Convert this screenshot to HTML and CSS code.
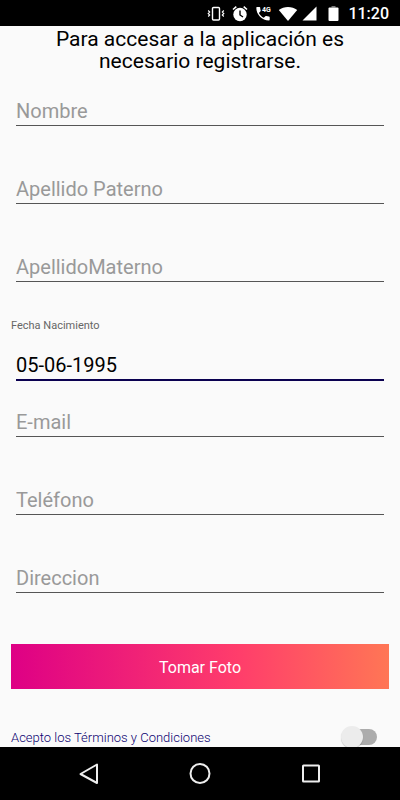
FILE: index.html
```html
<!DOCTYPE html>
<html lang="es">
<head>
    <meta charset="UTF-8">
    <meta name="viewport" content="width=device-width, initial-scale=1.0">
    <title>Registro</title>

    <link rel="stylesheet" href="styles.css">
</head>
<body>

    <!--  Barra de estado  -->

    <header class="status">
        <svg width="18" height="18" viewBox="0 0 18 18" fill="none" stroke="#fff">
            <rect x="5.500" y="2.500" width="7" height="12.500" rx="1" stroke-width="1.400"/>
            <path d="M1.200 5.500 L2.700 7 L1.200 8.500 L2.700 10 L1.200 11.500 M16.800 5.500 L15.300 7 L16.800 8.500 L15.300 10 L16.800 11.500" stroke-width="1.100"/>
        </svg>
        <svg class="alarm" width="16" height="18" viewBox="0 0 16 18">
            <circle cx="8" cy="9.500" r="6.700" fill="#fff"/>
            <path d="M1 4.500 L4.300 1.700 M15 4.500 L11.700 1.700" stroke="#fff" stroke-width="1.600" fill="none"/>
            <path d="M8 5.500 V10 L11 12" stroke="#000" stroke-width="1.400" fill="none"/>
        </svg>
        <svg class="call" width="17" height="18" viewBox="0 0 17 18">
            <path d="M2 2 H4.500 C5 2 5.200 2.300 5.200 2.700 C5.200 3.700 5.400 4.600 5.700 5.500 C5.800 5.800 5.700 6.100 5.500 6.300 L3.900 7.900 C5 10 6.700 11.700 8.800 12.800 L10.400 11.200 C10.600 11 10.900 10.900 11.200 11 C12.100 11.300 13 11.500 14 11.500 C14.400 11.500 14.700 11.800 14.700 12.200 V14.700 C14.700 15.100 14.400 15.400 14 15.400 C7 15.400 1.300 9.700 1.300 2.700 C1.300 2.300 1.600 2 2 2 Z" fill="#fff"/>
            <text x="7" y="7" class="net">4G</text>
        </svg>
        <svg class="wifi" width="20" height="18" viewBox="0 0 20 18">
            <path d="M10 16 L.8 5 C6 .9 14 .9 19.200 5 Z" fill="#fff"/>
        </svg>
        <svg class="signal" width="15" height="18" viewBox="0 0 15 18">
            <path d="M14.500 1.500 V15.500 H.5 Z" fill="#fff"/>
        </svg>
        <svg class="battery" width="11" height="18" viewBox="0 0 11 18">
            <path d="M3.500 1 H7.500 V2.500 H3.500 Z" fill="#777"/>
            <rect x=".5" y="2.500" width="10" height="13.500" rx="1" fill="#fff"/>
        </svg>
        <span class="clock">11:20</span>
    </header>

    <!--  Formulario de registro  -->

    <main>
        <h1>Para accesar a la aplicación es necesario registrarse.</h1>

        <form>
            <input type="text" class="field" placeholder="Nombre" aria-label="Nombre">
            <input type="text" class="field" placeholder="Apellido Paterno" aria-label="Apellido Paterno">
            <input type="text" class="field" placeholder="ApellidoMaterno" aria-label="Apellido Materno">

            <div class="date">
                <label for="fecha">Fecha Nacimiento</label>
                <input type="text" id="fecha" class="field active" value="05-06-1995">
            </div>

            <input type="email" class="field" placeholder="E-mail" aria-label="E-mail">
            <input type="tel" class="field" placeholder="Teléfono" aria-label="Teléfono">
            <input type="text" class="field" placeholder="Direccion" aria-label="Direccion">

            <button type="button" class="photo">Tomar Foto</button>

            <div class="terms">
                <label for="acepto">Acepto los Términos y Condiciones</label>
                <input type="checkbox" id="acepto" class="switch">
            </div>
        </form>
    </main>

    <!--  Botones de navegación  -->

    <nav>
        <button type="button" aria-label="Atrás">
            <svg width="24" height="24" viewBox="0 0 24 24"><path d="M20 2.500 V21 L3.500 12 Z"/></svg>
        </button>
        <button type="button" aria-label="Inicio">
            <svg width="24" height="24" viewBox="0 0 24 24"><circle cx="12" cy="11.500" r="9.500"/></svg>
        </button>
        <button type="button" aria-label="Recientes">
            <svg width="24" height="24" viewBox="0 0 24 24"><rect x="4" y="3.500" width="16" height="16" rx=".5"/></svg>
        </button>
    </nav>

</body>
</html>
```
FILE: styles.css
```css
* {
    margin: 0;
    padding: 0;
    box-sizing: border-box;
}

body {
    display: flex;
    flex-direction: column;
    height: 100vh;
    font-family: Roboto, sans-serif;
    color: #000;
    background-color: #fafafa;
}

.status {
    display: flex;
    flex-shrink: 0;
    align-items: center;
    justify-content: flex-end;
    height: 26px;
    padding: 2px 11px 0;
    background-color: #000;
}
.alarm,
.call {
    margin-left: 7px;
}
.wifi {
    margin-left: 6px;
}
.signal {
    margin-left: 4px;
}
.battery {
    margin-left: 11px;
}
.net {
    font-size: 7px;
    font-weight: 700;
    fill: #fff;
}
.clock {
    margin-left: 9px;
    font-size: 16px;
    font-weight: 500;
    line-height: 24px;
    color: #fff;
}

main {
    flex: 1;
    min-height: 0;
    padding: 2px 11px 0;
    overflow-y: auto;
    scrollbar-width: none;
}

h1 {
    padding: 0 40px;
    font-size: 21px;
    font-weight: 400;
    line-height: 22px;
    text-align: center;
}

form {
    display: flex;
    flex-direction: column;
    gap: 42px;
    padding: 18px 0 12px;
}

.field {
    height: 36px;
    margin: 0 5px;
    padding: 6px 0 0;
    font-family: inherit;
    font-size: 20px;
    color: #000;
    background: none;
    border: 0;
    border-bottom: 1px solid #555;
    border-radius: 0;
    outline: none;
}
.field::placeholder {
    color: #999;
}
.field.active {
    padding-top: 5px;
    border-bottom: 2px solid #0a0050;
}

.date {
    display: flex;
    flex-direction: column;
    gap: 12px;
    margin: -5px 0 -22px;
}
.date label {
    font-size: 11px;
    line-height: 14px;
    color: #666;
}

.photo {
    height: 45px;
    margin-top: 9px;
    padding-top: 2px;
    font-family: inherit;
    font-size: 16px;
    color: #fff;
    background-image: linear-gradient(90deg, #de0085, #ff3d6b 60%, #ff7655);
    border: 0;
}

.terms {
    display: flex;
    align-items: center;
    justify-content: space-between;
    height: 24px;
    margin-top: -6px;
    padding-right: 12px;
}
.terms label {
    font-size: 13px;
    font-weight: 300;
    color: #0a0070;
}

.switch {
    position: relative;
    width: 32px;
    height: 16px;
    background-color: #acacac;
    border-radius: 8px;
    -webkit-appearance: none;
    appearance: none;
}
.switch::before {
    content: "";
    position: absolute;
    top: -3px;
    left: -4px;
    width: 22px;
    height: 22px;
    background-color: #ececec;
    border-radius: 50%;
    box-shadow: 0 1px 1px rgba(0, 0, 0, .2);
}
.switch:checked::before {
    left: 14px;
}

nav {
    display: flex;
    flex-shrink: 0;
    align-items: center;
    justify-content: center;
    gap: 87px;
    height: 53px;
    background-color: #000;
}
nav button {
    width: 24px;
    height: 24px;
    background: none;
    border: 0;
}
nav svg {
    display: block;
    fill: none;
    stroke: #eee;
    stroke-width: 2px;
    stroke-linejoin: round;
}
```
